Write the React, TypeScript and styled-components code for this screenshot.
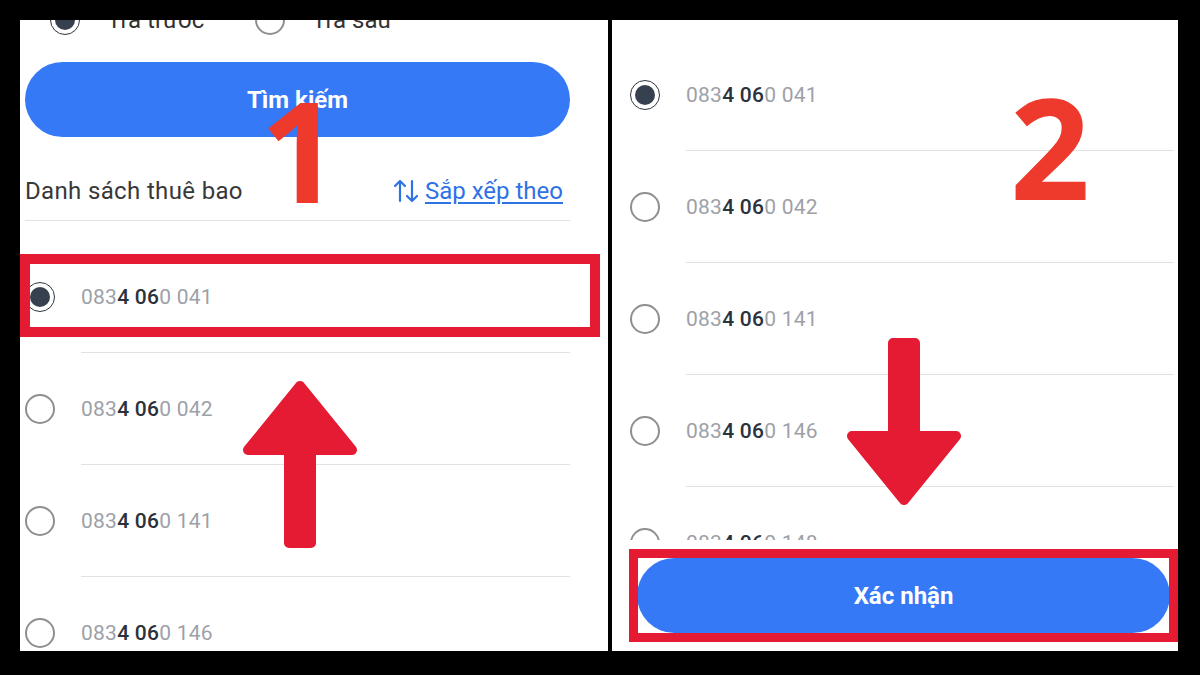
import styled, { createGlobalStyle } from "styled-components";

/* ── Global ─────────────────────────────────────────── */

const GlobalStyle = createGlobalStyle`
  html, body { margin: 0; padding: 0; background: #000; }
  * { box-sizing: border-box; }
  body { font-family: Roboto, "Noto Sans", Arial, sans-serif; }
`;

const BLUE = "#3679f6";
const RED = "#e51a33";

/* ── Layout ─────────────────────────────────────────── */

const Stage = styled.div`
  width: 1200px;
  height: 675px;
  background: #000;
  display: flex;
  gap: 4px;
  padding: 20px 22px 24px 20px;
`;

const Panel = styled.div<{ $w: number }>`
  position: relative;
  width: ${(p) => p.$w}px;
  height: 631px;
  background: #fff;
  overflow: hidden;
  display: flex;
  flex-direction: column;
`;

const LeftContent = styled.div`
  padding: 0 38px 0 5px;
  display: flex;
  flex-direction: column;
`;

/* ── Top radio row (clipped) ────────────────────────── */

const TopRow = styled.div`
  margin-top: -20px;
  height: 40px;
  display: flex;
  align-items: center;
  padding-left: 25px;
`;

const TopOption = styled.div<{ $w?: number }>`
  display: flex;
  align-items: center;
  gap: 27px;
  width: ${(p) => (p.$w ? `${p.$w}px` : "auto")};
  font-size: 24px;
  color: #333;
`;

/* ── Radio ──────────────────────────────────────────── */

const RadioRing = styled.span<{ $on?: boolean }>`
  flex: none;
  width: 30px;
  height: 30px;
  border-radius: 50%;
  border: ${(p) => (p.$on ? "1.5px solid #2f3540" : "2px solid #8f8f8f")};
  display: flex;
  align-items: center;
  justify-content: center;
  &::after {
    content: "";
    display: ${(p) => (p.$on ? "block" : "none")};
    width: 20px;
    height: 20px;
    border-radius: 50%;
    background: #36404e;
  }
`;

/* ── Buttons ────────────────────────────────────────── */

const PillButton = styled.div`
  height: 75px;
  border-radius: 38px;
  background: ${BLUE};
  color: #fff;
  font-size: 24px;
  font-weight: 700;
  display: flex;
  align-items: center;
  justify-content: center;
`;

const SearchButton = styled(PillButton)`
  margin-top: 22px;
`;

/* ── List header ────────────────────────────────────── */

const ListHeader = styled.div`
  margin-top: 30px;
  height: 48px;
  display: flex;
  align-items: center;
  justify-content: space-between;
  padding-right: 7px;
`;

const ListTitle = styled.span`
  font-size: 24px;
  letter-spacing: 0.35px;
  color: #383838;
`;

const SortLink = styled.span`
  display: flex;
  align-items: center;
  gap: 6px;
  font-size: 24px;
  color: #2f72e4;
  span { text-decoration: underline; text-underline-offset: 3px; }
`;

const Rule = styled.div`
  margin-top: 5px;
  height: 1px;
  background: #e2e2e2;
`;

/* ── Subscriber rows ────────────────────────────────── */

const List = styled.div<{ $top: number }>`
  margin-top: ${(p) => p.$top}px;
  display: flex;
  flex-direction: column;
`;

const Row = styled.div`
  height: 112px;
  display: flex;
  flex-direction: column;
`;

const RowBody = styled.div`
  height: 111px;
  display: flex;
  align-items: center;
  gap: 26px;
`;

const RowRule = styled.div<{ $right: number }>`
  height: 1px;
  margin-left: 56px;
  margin-right: ${(p) => p.$right}px;
  background: #e2e2e2;
`;

const Number = styled.span`
  font-size: 21px;
  letter-spacing: 0.25px;
  color: #9da1a7;
  b { font-weight: 500; color: #2b323c; }
`;

/* ── Right panel parts ──────────────────────────────── */

const RightList = styled.div`
  flex: 1;
  overflow: hidden;
  padding: 19px 4px 0 18px;
`;

const Footer = styled.div`
  height: 111px;
  flex: none;
  padding: 18px 8px 0 25px;
  background: #fff;
`;

/* ── Annotations ────────────────────────────────────── */

const HighlightBox = styled.div<{ $l: number; $t: number; $w: number; $h: number; $b: number }>`
  position: absolute;
  left: ${(p) => p.$l}px;
  top: ${(p) => p.$t}px;
  width: ${(p) => p.$w}px;
  height: ${(p) => p.$h}px;
  border: ${(p) => p.$b}px solid ${RED};
  pointer-events: none;
`;

const StepNumber = styled.div<{ $l: number; $t: number }>`
  position: absolute;
  left: ${(p) => p.$l}px;
  top: ${(p) => p.$t}px;
  font-family: "Open Sans", "DejaVu Sans", sans-serif;
  font-weight: 700;
  font-size: 140px;
  line-height: 1;
  color: #ee3a2c;
`;

const ArrowWrap = styled.div<{ $l: number; $t: number }>`
  position: absolute;
  left: ${(p) => p.$l}px;
  top: ${(p) => p.$t}px;
  width: 116px;
  height: 168px;
`;

function BigArrow({ down }: { down?: boolean }) {
  const d = down
    ? "M58 162 L110 98 L69 98 L69 5 L47 5 L47 98 L6 98 Z"
    : "M58 6 L110 70 L69 70 L69 163 L47 163 L47 70 L6 70 Z";
  return (
    <svg width="116" height="168" viewBox="0 0 116 168">
      <path d={d} fill={RED} stroke={RED} strokeWidth="10" strokeLinejoin="round" />
    </svg>
  );
}

function SortIcon() {
  return (
    <svg width="26" height="24" viewBox="0 0 26 24" fill="none" stroke="#2f72e4" strokeWidth="2.2" strokeLinecap="round" strokeLinejoin="round">
      <path d="M7 22V2M2 7l5-5 5 5" />
      <path d="M19 2v20M14 17l5 5 5-5" />
    </svg>
  );
}

/* ── Data ───────────────────────────────────────────── */

const LEFT_ROWS = ["041", "042", "141", "146"];
const RIGHT_ROWS = ["041", "042", "141", "146", "148"];

function SubscriberRow({ tail, on, ruleRight }: { tail: string; on?: boolean; ruleRight: number }) {
  return (
    <Row>
      <RowBody>
        <RadioRing $on={on} />
        <Number>
          083<b>4 06</b>0 {tail}
        </Number>
      </RowBody>
      <RowRule $right={ruleRight} />
    </Row>
  );
}

/* ── Page ───────────────────────────────────────────── */

export default function App() {
  return (
    <>
      <GlobalStyle />
      <Stage>
        <Panel $w={588}>
          <LeftContent>
            <TopRow>
              <TopOption $w={205}>
                <RadioRing $on />
                Trả trước
              </TopOption>
              <TopOption>
                <RadioRing />
                Trả sau
              </TopOption>
            </TopRow>
            <SearchButton>Tìm kiếm</SearchButton>
            <ListHeader>
              <ListTitle>Danh sách thuê bao</ListTitle>
              <SortLink>
                <SortIcon />
                <span>Sắp xếp theo</span>
              </SortLink>
            </ListHeader>
            <Rule />
            <List $top={20}>
              {LEFT_ROWS.map((t, i) => (
                <SubscriberRow key={t} tail={t} on={i === 0} ruleRight={0} />
              ))}
            </List>
          </LeftContent>
          <HighlightBox $l={0} $t={234} $w={580} $h={83} $b={10} />
          <ArrowWrap $l={222} $t={360}>
            <BigArrow />
          </ArrowWrap>
          <StepNumber $l={240} $t={59}>1</StepNumber>
        </Panel>

        <Panel $w={566}>
          <RightList>
            {RIGHT_ROWS.map((t, i) => (
              <SubscriberRow key={t} tail={t} on={i === 0} ruleRight={0} />
            ))}
          </RightList>
          <Footer>
            <PillButton>Xác nhận</PillButton>
          </Footer>
          <HighlightBox $l={17} $t={529} $w={549} $h={93} $b={9} />
          <ArrowWrap $l={234} $t={318}>
            <BigArrow down />
          </ArrowWrap>
          <StepNumber $l={398} $t={56}>2</StepNumber>
        </Panel>
      </Stage>
    </>
  );
}
